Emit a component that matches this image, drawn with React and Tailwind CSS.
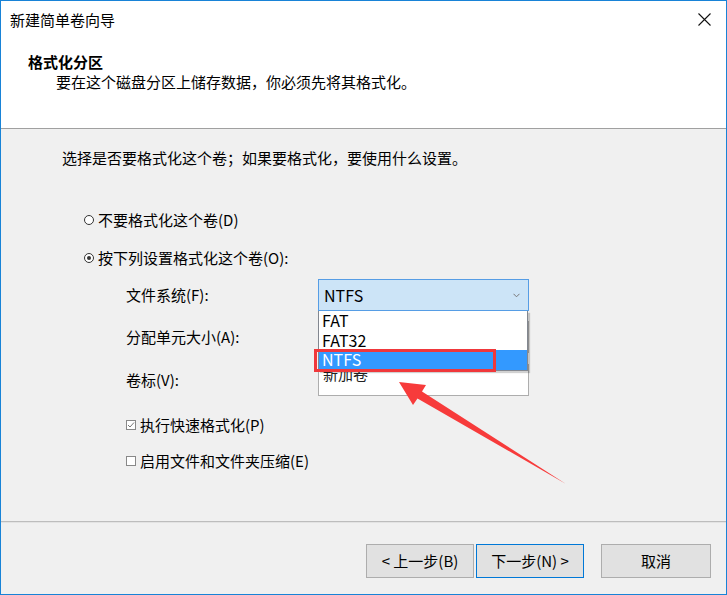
import React from "react";

const F = "font-['Noto_Sans_CJK_SC','Microsoft_YaHei',sans-serif]";

function Radio({ checked }) {
  return (
    <span className="relative inline-block w-[10px] h-[10px] rounded-full border border-[#333] bg-white shrink-0">
      {checked && <span className="absolute left-[2px] top-[2px] w-[4px] h-[4px] rounded-full bg-[#333]" />}
    </span>
  );
}

function Check({ checked }) {
  return (
    <span className="relative inline-flex items-center justify-center w-[10px] h-[10px] border border-[#888] bg-white shrink-0">
      {checked && (
        <svg width="8" height="8" viewBox="0 0 8 8">
          <path d="M1 4 L3 6 L7 1.5" fill="none" stroke="#777" strokeWidth="1" />
        </svg>
      )}
    </span>
  );
}

export default function App() {
  return (
    <div className={`relative w-[727px] h-[595px] border border-[#1883d7] bg-[#f0f0f0] flex flex-col text-[15px] text-black ${F}`}>
      {/* title bar */}
      <div className="h-[37px] bg-white flex items-center justify-between pl-[9px] pr-[15px]">
        <span className="leading-[20px]">新建简单卷向导</span>
        <svg width="13" height="13" viewBox="0 0 13 13">
          <path d="M0.5 0.5 L12.5 12.5 M12.5 0.5 L0.5 12.5" stroke="#111" strokeWidth="1.1" />
        </svg>
      </div>
      {/* header */}
      <div className="h-[90px] bg-white pt-[14px] pl-[27px]">
        <div className="font-bold leading-[20px]">格式化分区</div>
        <div className="leading-[20px] pl-[28px]">要在这个磁盘分区上储存数据，你必须先将其格式化。</div>
      </div>
      <div className="h-[1px] bg-[#a0a0a0]" />
      {/* body */}
      <div className="h-[392px] pt-[19px] flex flex-col">
        <div className="pl-[61px] leading-[20px]">选择是否要格式化这个卷；如果要格式化，要使用什么设置。</div>
        <div className="mt-[42px] pl-[83px] flex items-center gap-[4px] leading-[20px]">
          <Radio />
          <span>不要格式化这个卷(D)</span>
        </div>
        <div className="mt-[18px] pl-[83px] flex items-center gap-[4px] leading-[20px]">
          <Radio checked />
          <span>按下列设置格式化这个卷(O):</span>
        </div>
        <div className="relative mt-[11px] pl-[125px] flex flex-col gap-[10px]">
          <div className="flex items-center h-[32px]">
            <span className="w-[192px]">文件系统(F):</span>
            <div className="w-[211px] h-[32px] bg-[#cce4f7] border border-[#569de5] flex items-center justify-between pl-[5px] pr-[8px]">
              <span className="text-[16px]">NTFS</span>
              <svg width="7" height="5" viewBox="0 0 7 5">
                <path d="M0.5 0.8 L3.5 3.8 L6.5 0.8" fill="none" stroke="#777" strokeWidth="1" />
              </svg>
            </div>
          </div>
          <div className="flex items-center h-[32px]">
            <span className="w-[192px]">分配单元大小(A):</span>
            <div className="w-[211px] h-[32px] bg-[#e1e1e1] border border-[#adadad]" />
          </div>
          <div className="flex items-center h-[32px] mt-[1px]">
            <span className="w-[192px]">卷标(V):</span>
            <div className="w-[211px] h-[32px] bg-white border border-[#adadad] flex items-start pl-[4px]">
              <span className="leading-[18px] text-[#222]">新加卷</span>
            </div>
          </div>
          {/* dropdown list overlay */}
          <div className="absolute left-[317px] top-[32px] w-[210px] h-[60px] bg-white border border-[#828790] border-t-0 shadow-[2px_2px_1px_rgba(0,0,0,0.18)] flex flex-col text-[16px]">
            <div className="h-[20px] leading-[18px] pl-[3px]">FAT</div>
            <div className="h-[20px] leading-[18px] pl-[3px]">FAT32</div>
            <div className="h-[20px] leading-[19px] pl-[3px] bg-[#3399ff] text-white">NTFS</div>
          </div>
          {/* red highlight box */}
          <div className="absolute left-[313px] top-[70px] w-[182px] h-[23px] border-[3px] border-[#f0383b]" />
        </div>
        <div className="mt-[19px] pl-[125px] flex items-center gap-[4px] leading-[20px]">
          <Check checked />
          <span>执行快速格式化(P)</span>
        </div>
        <div className="mt-[16px] pl-[125px] flex items-center gap-[4px] leading-[20px]">
          <Check />
          <span>启用文件和文件夹压缩(E)</span>
        </div>
      </div>
      <div className="h-[2px] bg-[#bdbdbd] border-b border-[#e3e3e3]" />
      {/* footer */}
      <div className="flex-1 flex items-start justify-end pt-[21px] pr-[15px]">
        <div className="flex">
          <button className="w-[108px] h-[34px] bg-[#e1e1e1] border border-[#adadad] text-[15px]">&lt; 上一步(B)</button>
          <button className="ml-[2px] w-[108px] h-[34px] bg-[#e1e1e1] border border-[#0078d7] text-[15px]">下一步(N) &gt;</button>
          <button className="ml-[17px] w-[110px] h-[34px] bg-[#e1e1e1] border border-[#adadad] text-[15px]">取消</button>
        </div>
      </div>
      {/* red arrow */}
      <svg className="absolute left-0 top-0 pointer-events-none" width="727" height="595" viewBox="0 0 727 595">
        <polygon points="398,381 425,384 421,390.5 565,483 416.5,397.5 412,404" fill="#f73b3b" />
      </svg>
    </div>
  );
}
